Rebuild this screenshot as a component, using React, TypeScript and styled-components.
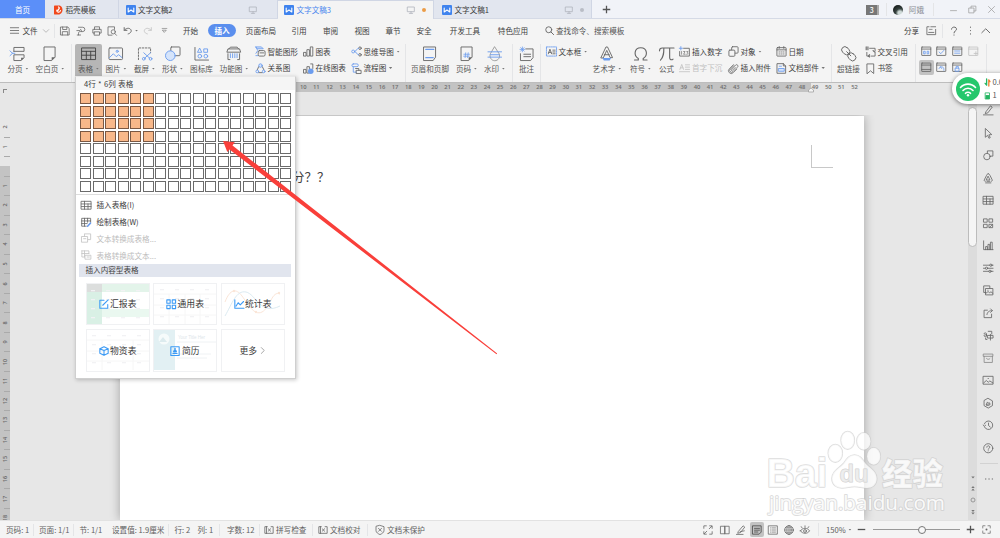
import React from 'react';
import styled, { createGlobalStyle, css } from 'styled-components';

const GlobalStyle = createGlobalStyle`
  html, body { margin: 0; padding: 0; overflow: hidden; }
  * { box-sizing: border-box; }
  body { font-family: "Noto Sans CJK SC", sans-serif; font-size: 7.6px; line-height: 10px; color: #3e3e3e; }
`;

const INK = '#666';
const BLUE = '#6b9cee';

/* ---------- shared parts ---------- */

const Window = styled.div`
  position: relative;
  width: 1000px;
  height: 538px;
  overflow: hidden;
  display: flex;
  flex-direction: column;
  background: #f4f4f4;
  white-space: nowrap;
`;

const Svg = styled.svg<{ $s: number }>`
  display: block;
  flex: none;
  width: ${p => p.$s}px;
  height: ${p => p.$s}px;
  overflow: visible;
  fill: none;
  stroke: ${INK};
  stroke-width: 0.95;
  stroke-linecap: round;
  stroke-linejoin: round;
  .b { stroke: ${BLUE}; }
  .bf { fill: ${BLUE}; stroke: none; }
  .lf { fill: #d5e4fb; stroke: ${BLUE}; }
  .kf { fill: ${INK}; stroke: none; }
`;

const Divider = styled.i<{ $h: number; $l?: number; $r?: number }>`
  flex: none;
  width: 1px;
  height: ${p => p.$h}px;
  margin-left: ${p => p.$l ?? 0}px;
  margin-right: ${p => p.$r ?? 0}px;
  background: #e4e5e7;
`;

const Caret = styled.i`
  flex: none;
  width: 3.4px;
  height: 2px;
  margin-left: 2.6px;
  background: #777;
  clip-path: polygon(0 0, 100% 0, 50% 100%);
`;

const icons: Record<string, React.ReactNode> = {
  /* 16 unit ribbon icons */
  pageBreak: <><path d="M4 5.500V1.500h10.500V5.500H4M4 9.500v5.500h7.500l3-3V9.500z" /><path className="kf" d="M11.500 15v-3h3z" /><path className="b" d="M0 5l2.500 2.500L0 10M2.500 7.500H5" /></>,
  blank: <><path d="M2.500 1h11v10.500L10 15H2.500z" /><path className="kf" d="M10 15v-3.500h3.500z" /></>,
  table: <path stroke="#444" d="M1 2h14v12H1zM1 5.500h14M1 9.500h14M5.500 5.500V14M10 5.500V14" />,
  picture: <><rect x="1" y="2" width="14" height="12" rx="1" /><path className="b" d="M1.500 12l4-4 3 3 2.500-2 3.500 3" /><circle className="b" cx="9.500" cy="5.500" r="1.100" /></>,
  clip: <><path strokeDasharray="1.600 1.600" d="M1.500 14V2h12.500v5" /><path className="b" d="M7 7l6 5.500M14 7l-6 5.500" /><circle className="b" cx="7" cy="13.200" r="1.400" /><circle className="b" cx="14" cy="13.200" r="1.400" /></>,
  shapes: <><rect x="6" y="1" width="9.500" height="9" rx=".8" /><circle className="lf" cx="5.500" cy="10" r="5" /></>,
  iconLib: <g className="b"><path stroke={INK} d="M1 1.500v13h14" /><path d="M6 2.500l2 4H4zM10.500 3h3.500v3.500h-3.500z" /><circle cx="6" cy="10.500" r="1.900" /><circle cx="12.200" cy="10.500" r="1.900" /></g>,
  func: <><path d="M1 6l1-3h12l1 3zM3 3l1.500-1.800h7L13 3M2 8v6h2M14 8v6h-2" /><path className="b" d="M4.500 8v4M6.800 8v4M9.100 8v4M11.400 8v4" /></>,
  headFoot: <><path d="M2 1h12v10.500L11.500 15H2z" /><path className="b" strokeWidth="1.500" d="M4 3.500h8M4 12h7.500" /></>,
  pageNo: <><path d="M2.500 1h11v10.500L10 15H2.500z" /><path className="kf" d="M10 15v-3.500h3.500z" /><path className="b" d="M6.900 7L6.300 12M9.500 7L8.900 12M5 8.500h5.800M4.800 10.500h5.800" strokeWidth=".8" /></>,
  watermark: <><path d="M8 1l4.500 7a5 5 0 1 1-9 0z" stroke="#999" /><path className="b" d="M1 6h14M3.500 9h9M1 11.500h14" /></>,
  comment: <><path d="M7 3h7.500v9L12 15H1.500V8" /><path d="M5 8.500h7M5 11h7" /><path className="b" strokeWidth=".8" d="M3.500 1v5M1 3.500h5M1.700 1.700l3.600 3.600M5.300 1.700L1.700 5.300" /></>,
  wordArt: <><path d="M2 12L7.200 1h1.600L14 12h-2.500L8 4.500 4.500 12zM5.500 9h5" /><path className="bf" d="M3.500 12.500h9L11 15H5z" /></>,
  omega: <path strokeWidth="1.150" d="M1.500 14.500h4v-1.700C.5 10 1 1.800 8 1.800s7.500 8.200 2.500 11v1.700h4" />,
  formula: <path strokeWidth="1.150" d="M.5 5c0-2 1-3 3-3h12M5 2c0 5 0 9-3.500 12.500M11 2v10c0 2 2 3 3.500 1.500" />,
  link: <g transform="rotate(45 8 8)"><rect x="-1" y="4.700" width="9" height="6.600" rx="3.300" /><rect x="8" y="4.700" width="9" height="6.600" rx="3.300" /><path d="M5 8h6" /></g>,
  /* 12 unit small icons */
  smart: <><path className="lf" d="M1 1h6l2 2H3z" /><path className="b" d="M1 10.500h2M1 1l2 4-2 3" /><rect x="3.500" y="5" width="7.500" height="6" rx="1.500" /><path d="M5.500 7.500h4" /></>,
  relation: <><path d="M4 4L2.500 7.500M8 4l1.700 3.500M4 10.500h4" /><circle className="lf" cx="6" cy="2.800" r="1.900" /><circle className="b" cx="2.500" cy="9.200" r="1.500" /><circle className="b" cx="9.500" cy="9.200" r="1.500" /></>,
  chart: <path d="M1 7h2.300v4H1zM4.700 4H7v7H4.700zM8.400 1h2.300v10H8.400z" />,
  chartWeb: <><path d="M1 7h2.300v4H1zM4.700 4H7v7H4.700zM8.400 1h2.300v5" /><circle className="bf" cx="8.500" cy="9" r="3" /></>,
  mind: <g className="b"><circle cx="2.400" cy="6" r="1.600" /><circle stroke={INK} cx="9.800" cy="2.400" r="1.400" /><circle stroke={INK} cx="9.800" cy="9.600" r="1.400" /><path d="M4 6c2 0 2-3.600 4.300-3.600M4 6c2 0 2 3.600 4.300 3.600" /></g>,
  flow: <><rect className="b" x="1" y="1" width="7" height="3" rx="1.500" /><path className="b" d="M2.500 4v6H6" /><rect x="6" y="8" width="5" height="3.500" /><path d="M8.500 8V6H5" /></>,
  textBox: <><rect className="b" strokeDasharray="1.500 1" x=".5" y="1" width="11" height="10" /><path d="M2.500 8.500l1.800-5 1.800 5M3 7h2.500M7.500 4.500H10M7.500 6.500H10M7.500 8.500H10" /></>,
  insNum: <><path d="M5 2.500h6.300v8.500H.7V6" /><path d="M2.800 6v3M5 6h1.600L5 9h1.700M8.500 6h1.200L9 7.300l.8.700-.6 1h-.8" strokeWidth=".7" /><path className="b" d="M2 .7v3.600M.3 2.500h3.500" /></>,
  dropCap: <g stroke="#c4c4c4"><path d="M1 7l2-5.500L5 7M1.700 5.300h2.600M7 2h4.500M7 4.500h4.500M7 7h4.500M.5 9.500h11" /></g>,
  object: <><rect x="4" y=".8" width="7" height="7" rx="1" /><rect x="1" y="4.500" width="6.500" height="6.700" rx="1" fill="#f4f4f4" /></>,
  clipAttach: <path transform="rotate(45 6 6)" d="M4 3.500V9a2 2 0 0 0 4 0V2a1.500 1.500 0 0 0-3-.500V8.500a.800.800 0 0 0 1.500 0V4M3 3v6.500a3 3 0 0 0 6 0V4" strokeWidth=".8" />,
  calendar: <><rect x="1" y="1.800" width="10" height="9.200" rx=".5" /><path d="M3.500.6v2M8.500.6v2M1 4.200h10" /><path strokeWidth=".8" d="M3.200 6.500h1M5.500 6.500h1M7.800 6.500h1M3.200 8.700h1M5.500 8.700h1M7.800 8.700h1" /></>,
  docPart: <><path className="lf" d="M3 6h6v3H3z" /><path d="M1.500.7h6.500l2.500 2.500v8h-9zM8 .7v2.500h2.500" /><path className="b" d="M3.500 3.500h2.500" /></>,
  crossRef: <><path d="M5 2.500h6v3M2 7v4h3.500M7 11h4V8" /><path d="M1.300 1v3M3.200 1v3M8.800 5l2.200 2M5 9.500L3.800 11 5 12" strokeWidth="1.200" /></>,
  bookmark: <path d="M2.500 1h7v10.500L6 8.500l-3.500 3z" />,
  ctl: <><rect x=".8" y="1.200" width="10.400" height="9.600" rx=".4" /><path d="M.8 3.500h10.400" /></>,
  /* quick access */
  save: <><path d="M1 1.200h8.500l1.500 2v7.600H1z" /><path d="M3.200 1.200v3h5v-3M2.800 10.800V6.800h6.400v4" /></>,
  exportPdf: <path d="M3 1.500h5a2.600 2.600 0 0 1 0 5.200H5c-1.500 0-2 1-2 2v2M1 5.500h3.500M5.500 4L7 6.500M1.500 10.800h4" />,
  print: <path d="M3 4V1h6v3M3 8.500H1V4h10v4.500H9M3 7h6v4H3z" />,
  preview: <><path d="M6 11H1.200V1H9v3" /><circle cx="7.500" cy="7" r="2.500" /><path d="M9.400 9l2 2.200" /></>,
  undo: <path strokeWidth="1.200" d="M1.500 2v3.500H5M1.700 5.300C4 2.500 8 2 9.800 4.500S9 9.500 6.500 10" />,
  redo: <path stroke="#c8c8c8" strokeWidth="1.200" d="M10.500 2v3.500H7M10.300 5.300C8 2.500 4 2 2.200 4.500S3 9.500 5.500 10" />,
  more: <path d="M2 2.500h8M3 5.500h6L6 8.800z" />,
  burger: <path strokeWidth="1.100" d="M.5 2.300h11M.5 6h11M.5 9.700h11" />,
  down: <path stroke="#999" d="M2 4l4 4 4-4" />,
  up: <path strokeWidth="1.200" d="M1 8.500L6 3.500l5 5" />,
  search: <><circle cx="5" cy="5" r="4" strokeWidth="1.200" /><path strokeWidth="1.300" d="M8 8l3.500 3.500" /></>,
  share: <><path d="M3.500 2H1v9h10V5" /><path d="M5.500 2H11M3 8.500h6" /><path strokeWidth=".8" d="M4 5h3" /></>,
  question: <path strokeWidth="1.200" d="M3 3.800C3 .4 9 .4 9 3.800 9 6 6 5.800 6 8.300M6 10.700v.3" />,
  dotsV: <path strokeWidth="1.500" d="M6 1.500v.1M6 6v.1M6 10.500v.1" />,
  monitor: <path stroke="#b0b4bd" strokeWidth="1.200" d="M1 1.500h10v7H1zM6 8.500v2.500M3.500 11h5" />,
  plus: <path stroke="#555" strokeWidth="1.700" strokeLinecap="butt" d="M6 1v10M1 6h10" />,
  minus: <path stroke="#555" strokeWidth="1.700" strokeLinecap="butt" d="M1 6h10" />,
  winMin: <path stroke="#999" d="M2 7.500h8" />,
  winMax: <path stroke="#999" d="M4 4V1.500h6.500V8H8M1.500 4H8v6.500H1.500z" />,
  winClose: <path stroke="#999" d="M2 2l8 8M10 2l-8 8" />,
  /* sidebar */
  pen: <path d="M3.500 7.500l5-6.500 2 1.500-5 6.500-2.500.700zM.5 11.300h11" />,
  cursor: <path d="M3 .8l7 6.700-3.300.3L8.300 11l-1.500.7-1.500-3.300L3 10.300z" />,
  sideShape: <><path d="M5 3.500V1h6.300v6H8.500" /><circle cx="4.500" cy="7.500" r="3.700" /></>,
  cone: <path d="M6 .8c1 0 1.500 1 2 2l2.500 5c.5 1.200-.5 1.700-1.300 1.700M6 .8c-1 0-1.500 1-2 2L1.500 7.800c-.5 1.200.5 1.700 1.300 1.700M3 11.300h6M6 4l2 4H4zM4.500 9.500h3" />,
  sideTable: <path d="M.5 1.500h11v9H.5zM.5 4.500h11M.5 7.500h11M4 1.500v9M8 4.500v6" />,
  apps: <><path d="M1 1h3.800v3.800H1zM7.200 1H11v3.800H7.200zM1 7.200h3.800V11H1zM7.200 7.200H11V11H7.200z" /><path d="M7.500 10.700l3.200-3.200" /></>,
  sideChart: <path d="M.7 1v10h10.800M3 11V7.500h2V11M5.700 11V5h2v6M8.500 11V2.500h2V11" />,
  sliders: <><path d="M.5 2.500h7M10.500 2.500h1M.5 6h2M5.500 6h6M.5 9.500h6M9.500 9.500h2" /><circle cx="9" cy="2.500" r="1.300" /><circle cx="4" cy="6" r="1.300" /><circle cx="8" cy="9.500" r="1.300" /></>,
  gallery: <path d="M3 8.500H.8v-7.500h7v2.500M3.300 4h8v7.300h-8zM3.300 9.500l2.500-2 1.800 1.300 1.500-1 2.200 1.700M5.500 6h.3" />,
  shareOut: <path d="M5 2.500H1.200V11h8.600V7M4.500 7.500C5 4 7.500 3 10.500 3M8.700 1l2 2-2 2" />,
  translate: <path d="M1 4.200c0-1.200 3-1.200 3 0V7M4 5.300c-4 0-3.500 2.200-1.500 2 1 0 1.500-.8 1.500-.8M6 1.500h4v3M5.500 6.200h6v3h-6zM8.500 5v6.500M3 9v1.800h1.500" />,
  archive: <g stroke="#888"><path d="M.7 1.200h10.600v2.600H.7zM1.300 3.800v7h9.400v-7M4 6.300c1 1.300 3 1.300 4 0" /></g>,
  sidePic: <path d="M.5 1.500h11v9H.5zM.8 9l3-2.700 2.200 2 1.800-1.500L11.200 9M5.800 4h.4" />,
  hexagon: <path d="M6 .5l4.800 2.800v5.400L6 11.500 1.200 8.700V3.300zM4 8c-1-2 1-2 1-3.500L6.500 6l1-.5C9 8.500 6 9.500 4 8zM5 7h2" />,
  history: <path d="M1.700 8a4.900 4.900 0 1 0-.2-3.500M.3 5.800l1.300 1.500 1.400-1.300M6.300 3.500V6.300l2 1.700" />,
  help: <><circle cx="6" cy="6" r="5.200" /><path d="M4.300 4.800c0-2.200 3.400-2.200 3.400 0 0 1.200-1.700 1-1.700 2.400M6 8.900v.1" /></>,
  dotsH: <path stroke="#888" strokeWidth="1.700" d="M2 6h.1M6 6h.1M10 6h.1" />,
  /* menu + status */
  tblPen: <><path d="M11 6V1.500H.8v9H6M.8 4.500H11M.8 7.500H7M4 1.500v9M7.500 1.500V6" /><path className="b" strokeWidth="1.800" d="M7.500 10.500l3.300-3.500" /></>,
  conv1: <path stroke="#c4c4c4" d="M5 1h6v6.500H8M4 1v3M1 4h6.500v6.500H1zM3 6.500h2.500" />,
  conv2: <path stroke="#c4c4c4" d="M1 1h8v3M1 1v7h3M1 4h8M4 1v7M5 6h6.300v4.500H5zM7 8h2.500" />,
  spell: <path d="M4 2H1v8h10V2H8.500M5 4.500l3 3M8 4.500l-3 3M3 2v8" />,
  shield: <path d="M6 .5l4.800 1.500v4.500c0 2.500-2.500 4-4.800 5-2.300-1-4.800-2.500-4.800-5V2zM4.200 4l3.600 3.600M7.800 4L4.200 7.600" />,
  expand: <path d="M1 4V1h3M8 1h3v3M11 8v3H8M4 11H1V8M7.500 4.500L10.500 1.500M4.500 7.500l-3 3" />,
  book: <path d="M1 1.500h5v9H1zM6 1.500h5v9H6z" />,
  edit: <path d="M3 7.500l5.500-6.500 2 1.500-5 6.500-3 .8zM.5 11.300h8M5 8l5-1" />,
  doc: <path d="M1 1h10v7.500L8.500 11H1zM3 4h6M3 6.200h6M3 8.400h4" stroke="#444" />,
  outline: <><path d="M.8 1h10.400v10H.8z" /><path strokeWidth=".8" d="M3 3.500h.5M5 3.500h4M5 6h4M3 6h.5M5 8.500h4M3 8.500h.5" /></>,
  globe: <><circle cx="6" cy="6" r="5.200" /><path strokeWidth=".7" d="M.8 6h10.400M6 .8v10.400M1.800 3.300h8.400M1.800 8.700h8.400" /><ellipse cx="6" cy="6" rx="2.600" ry="5.200" strokeWidth=".7" /></>,
  eye: <><path d="M.5 7c2.500-4 8.500-4 11 0-2.500 4-8.500 4-11 0zM6 3V1M2.500 3.500l-1-1.500M9.500 3.500l1-1.500" /><circle cx="6" cy="7.200" r="1.700" /></>,
  fit: <><path d="M1 4V1h3M8 1h3v3M11 8v3H8M4 11H1V8" /><circle className="kf" cx="6" cy="6" r="1.300" /></>,
};

const SMALL = 12;
const LARGE = 16;
const Icon = ({ n, s = 11, big }: { n: string; s?: number; big?: boolean }) => {
  const v = big ? LARGE : SMALL;
  return <Svg $s={s} viewBox={`0 0 ${v} ${v}`}>{icons[n]}</Svg>;
};

/* ---------- tab bar ---------- */

const TabBar = styled.header`
  display: flex;
  flex: none;
  height: 19px;
  background: #f1f3f8;
  border-bottom: 1px solid #d5dae6;
`;

const HomeTab = styled.div`
  width: 45px;
  height: 18px;
  background: #5b8ff9;
  color: #fff;
  text-align: center;
  line-height: 20px;
`;

const Tab = styled.div<{ $w: number; $pl: number; $active?: boolean }>`
  display: flex;
  align-items: center;
  width: ${p => p.$w}px;
  padding-left: ${p => p.$pl}px;
  padding-top: ${p => (p.$active ? 0 : 2)}px;
  height: ${p => (p.$active ? 19 : 18)}px;
  background: ${p => (p.$active ? '#f4f4f4' : '#e2e6ef')};
  color: ${p => (p.$active ? '#4a86ee' : '#3a3a3a')};
  border-right: 1px solid #d0d6e4;
  border-top: ${p => (p.$active ? '1px solid #d0d6e4' : '0')};
`;

const TabText = styled.span`
  flex: 1;
  margin-left: 2.500px;
`;

const TabTools = styled.span<{ $r: number }>`
  display: flex;
  align-items: center;
  gap: 7px;
  margin-right: ${p => p.$r}px;
`;

const Dot = styled.i<{ $c: string }>`
  width: 4px;
  height: 4px;
  border-radius: 50%;
  background: ${p => p.$c};
`;

const WLogo = () => (
  <Svg $s={10} viewBox="0 0 10 10">
    <rect width="10" height="10" rx="1" fill="#3f83ee" stroke="none" />
    <path d="M2.200 3v4L5 5l2.800 2V3" stroke="#fff" strokeWidth="1.100" />
  </Svg>
);

const ShellLogo = () => (
  <Svg $s={10} viewBox="0 0 10 10">
    <path d="M2 .5h4c2.500 0 3.500 2.500 3.500 4.500S8 9.500 5.500 9.500H2C1 9.500 1 9 1 8V2C1 1 1 .5 2 .5z" fill="#f1481c" stroke="none" />
    <path d="M5.500 2c2 1-.5 2.500-.5 3.500M4 5c-1 2.500 3 3 3.500.500" stroke="#fff" strokeWidth="1.200" />
  </Svg>
);

const TabRight = styled.div`
  display: flex;
  align-items: center;
  height: 19px;
  margin-left: auto;
  color: #8a8d94;
`;

const CountBadge = styled.b`
  width: 13px;
  height: 10px;
  background: #777;
  border-right: 2px solid #aaa;
  color: #fff;
  font-size: 7px;
  font-weight: 500;
  line-height: 10px;
  text-align: center;
`;

const Avatar = styled.i`
  width: 10px;
  height: 10px;
  margin: 0 6px 0 6px;
  border-radius: 50%;
  background: radial-gradient(circle at 70% 80%, #cfdad8 0 18%, #36423f 40%, #1f2524 70%);
`;

const Slot = styled.span<{ $w: number }>`
  display: flex;
  flex: none;
  align-items: center;
  justify-content: center;
  width: ${p => p.$w}px;
`;

/* ---------- menu bar ---------- */

const MenuBar = styled.nav`
  display: flex;
  flex: none;
  align-items: center;
  height: 23px;
  padding-left: 8px;
`;

const ActiveMenu = styled.b`
  width: 28px;
  height: 13px;
  border-radius: 7px;
  background: #5b8fee;
  color: #fff;
  font-weight: 700;
  text-align: center;
  line-height: 13px;
`;

const MenuRight = styled.div`
  display: flex;
  align-items: center;
  margin-left: auto;
`;

const SearchBox = styled.span`
  display: flex;
  align-items: center;
  gap: 2px;
  margin-left: 10.500px;
  color: #555;
`;

const menus: [string, number][] = [
  ['页面布局', 47], ['引用', 29], ['审阅', 34], ['视图', 29], ['章节', 33], ['安全', 29], ['开发工具', 53], ['特色应用', 43],
];

/* ---------- ribbon ---------- */

const RibbonBar = styled.div`
  display: flex;
  flex: none;
  height: 41px;
  padding: 2px 0 0 4px;
  border-bottom: 1px solid #bdbdbd;
`;

const BigBtn = styled.div<{ $w: number; $on?: boolean }>`
  display: flex;
  flex: none;
  flex-direction: column;
  align-items: center;
  gap: 2.500px;
  width: ${p => p.$w}px;
  height: 32px;
  padding-top: 1.500px;
  color: #565656;
  ${p => p.$on && css`background: #b6b6b6; border-radius: 2px 2px 0 0;`}
`;

const Label = styled.span<{ $off?: boolean }>`
  display: flex;
  align-items: center;
  color: ${p => (p.$off ? '#c0c0c0' : 'inherit')};
`;

const SmallCol = styled.div<{ $w: number; $l?: number }>`
  display: flex;
  flex: none;
  flex-direction: column;
  gap: 5.500px;
  width: ${p => p.$w}px;
  margin-left: ${p => p.$l ?? 0}px;
  padding-top: 2px;
`;

const SmallBtn = styled.div`
  display: flex;
  align-items: center;
  gap: 2px;
  height: 11px;
`;

const Controls = styled.div`
  display: grid;
  grid-template-columns: repeat(4, 15.700px);
  grid-auto-rows: 15px;
  row-gap: 1px;
  width: 67px;
`;

const ControlCell = styled.span<{ $on?: boolean; $off?: boolean }>`
  display: flex;
  align-items: center;
  justify-content: center;
  width: 15px;
  height: 15px;
  border-radius: 2px;
  background: ${p => (p.$on ? '#c2c2c2' : 'transparent')};
  opacity: ${p => (p.$off ? 0.35 : 1)};
`;

const Big = ({ w, n, t, caret, on }: { w: number; n: string; t: string; caret?: boolean; on?: boolean }) => (
  <BigBtn $w={w} $on={on}>
    <Icon n={n} s={15.5} big />
    <Label>{t}{caret && <Caret />}</Label>
  </BigBtn>
);

type SmallSpec = [string, string, ('c' | 'off')?];
const Smalls = ({ w, l, items }: { w: number; l?: number; items: SmallSpec[] }) => (
  <SmallCol $w={w} $l={l}>
    {items.map(([n, t, f]) => (
      <SmallBtn key={t}>
        <Icon n={n} s={11} />
        <Label $off={f === 'off'}>{t}{f === 'c' && <Caret />}</Label>
      </SmallBtn>
    ))}
  </SmallCol>
);

const controlMarks: React.ReactNode[] = [
  <path className="b" d="M3 8.500V6h1.800v2.500zM7 8.500V6h1.800v2.500z" />,
  <path className="b" d="M3.500 6.800L5.500 8.800 9 5" />,
  <path className="b" d="M3 5.700h6M3 8.200h6" />,
  <path d="M7 8.500h4M9 6.500v4" />,
  <path d="M.8 8.500h10.400" />,
  <path className="b" d="M3.500 7.500L5 5.500l1.500 2M5 5.500c4 0 4 1 4 4" />,
  <path className="b" d="M4 7h4v3.500H4zM4.800 7V5h2.400v2" />,
];

const Ribbon = () => (
  <RibbonBar>
    <Big w={28} n="pageBreak" t="分页" caret />
    <Big w={36} n="blank" t="空白页" caret />
    <Divider $h={38} $l={3} $r={3} />
    <Big w={27} n="table" t="表格" caret on />
    <Big w={28} n="picture" t="图片" caret />
    <Big w={29} n="clip" t="截屏" caret />
    <Big w={27} n="shapes" t="形状" caret />
    <Big w={31} n="iconLib" t="图标库" />
    <Big w={34} n="func" t="功能图" caret />
    <Smalls w={48} l={3.5} items={[['smart', '智能图形'], ['relation', '关系图']]} />
    <Smalls w={48} items={[['chart', '图表'], ['chartWeb', '在线图表']]} />
    <Smalls w={54.500} items={[['mind', '思维导图', 'c'], ['flow', '流程图', 'c']]} />
    <Divider $h={38} $r={3} />
    <Big w={42} n="headFoot" t="页眉和页脚" />
    <Big w={31} n="pageNo" t="页码" caret />
    <Big w={25} n="watermark" t="水印" caret />
    <Divider $h={38} $l={5} />
    <Big w={27} n="comment" t="批注" />
    <Divider $h={38} />
    <Smalls w={44.500} l={4.500} items={[['textBox', '文本框', 'c']]} />
    <Big w={34} n="wordArt" t="艺术字" caret />
    <Big w={33} n="omega" t="符号" caret />
    <Big w={19} n="formula" t="公式" />
    <Smalls w={48.500} l={3} items={[['insNum', '插入数字'], ['dropCap', '首字下沉', 'off']]} />
    <Smalls w={48} items={[['object', '对象', 'c'], ['clipAttach', '插入附件']]} />
    <Smalls w={55} items={[['calendar', '日期'], ['docPart', '文档部件', 'c']]} />
    <Divider $h={38} $r={4} />
    <Big w={26} n="link" t="超链接" />
    <Smalls w={50} l={3} items={[['crossRef', '交叉引用'], ['bookmark', '书签']]} />
    <Divider $h={38} $r={3} />
    <Controls>
      {controlMarks.map((m, i) => (
        <ControlCell key={i} $on={i === 4} $off={i === 3}>
          <Svg $s={10.5} viewBox="0 0 12 12">{icons.ctl}{m}</Svg>
        </ControlCell>
      ))}
    </Controls>
    <Divider $h={30} />
  </RibbonBar>
);

/* ---------- work area ---------- */

const Work = styled.main`
  display: flex;
  flex: none;
  height: 437px;
  background: #e7e7e7;
`;

const VRuler = styled.div`
  width: 10px;
  height: 437px;
  padding-top: 6px;
  background: linear-gradient(#e7e7e7 0 83px, #c3c3c3 83px);
  overflow: hidden;
  display: flex;
  flex-direction: column;
  align-items: center;
  font: 600 5.500px/8px "Open Sans", sans-serif;
  color: #666;
`;

const VMark = styled.span<{ $h: number }>`
  display: flex;
  flex: none;
  align-items: center;
  justify-content: center;
  width: 10px;
  height: ${p => p.$h}px;
  border-bottom: 1px solid #a5a5a5;
  border-image: linear-gradient(90deg, transparent 40%, #aaa 40%) 1;
  span { transform: rotate(-90deg); }
`;

const TabStop = styled.i`
  flex: none;
  width: 4px;
  height: 4px;
  margin-bottom: 25px;
  border: solid #888;
  border-width: 1px 0 0 1px;
`;

const Canvas = styled.div`
  display: flex;
  flex-direction: column;
  width: 958px;
`;

const HRuler = styled.div`
  display: flex;
  flex: none;
  align-items: center;
  height: 9px;
  padding-left: 286.700px;
  background: linear-gradient(90deg, #e7e7e7 0 110px, #c3c3c3 110px 801px, #e7e7e7 801px);
  font: 600 5.800px/9px "Open Sans", sans-serif;
  color: #6e6e6e;
  span { flex: none; width: 13.130px; text-align: center; }
`;

const Page = styled.article`
  width: 744px;
  height: 404px;
  margin: 24px 0 0 110px;
  padding: 29px 31px 0 0;
  background: #fff;
  box-shadow: 0 0 10px rgba(0, 0, 0, 0.3);
  clip-path: inset(-1px -12px 0 -12px);
  display: flex;
  justify-content: space-between;
`;

const PageText = styled.p`
  margin: 25px 0 0 172px;
  font: 12.500px/16px "Liberation Serif", "Noto Sans CJK SC", serif;
  color: #444;
`;

const Corner = styled.i`
  width: 22px;
  height: 23px;
  border: solid #c8c8c8;
  border-width: 0 0 1px 1px;
`;

const ScrollTrack = styled.div`
  display: flex;
  flex-direction: column;
  align-items: center;
  width: 9px;
  padding-top: 24px;
  background: #dcdcdc;
`;

const Thumb = styled.i`
  width: 9px;
  height: 140px;
  border: 1px solid #bcbcbc;
  border-radius: 5px;
  background: #f5f5f5;
`;

const ScrollTools = styled.div`
  display: flex;
  flex: 1;
  flex-direction: column;
  justify-content: flex-end;
  padding-bottom: 2px;
`;

const ScrollGlyphs = styled.svg`
  display: block;
  width: 8px;
  height: 42px;
`;

const Side = styled.aside`
  display: flex;
  flex-direction: column;
  align-items: center;
  width: 23px;
  padding-top: 16px;
`;

const SideSlot = styled.span`
  display: flex;
  flex: none;
  align-items: center;
  height: 22.530px;
`;

const SideLine = styled.i`
  flex: none;
  width: 18px;
  height: 1px;
  margin: 3.500px 0;
  background: #d2d2d2;
`;

const sideIcons = ['pen', 'cursor', 'sideShape', 'cone', 'sideTable', 'apps', 'sideChart', 'sliders', 'gallery', 'shareOut', 'translate', 'archive', 'sidePic', 'hexagon', 'history', 'help'];

/* ---------- table menu ---------- */

const Menu = styled.section`
  position: absolute;
  left: 75px;
  top: 76px;
  width: 221px;
  height: 303px;
  background: #fff;
  border: 1px solid #cfcfcf;
  border-top-color: #e8e8e8;
  box-shadow: 1px 1px 4px rgba(0, 0, 0, 0.22);
`;

const MenuTitle = styled.div`
  height: 13px;
  padding-left: 8px;
  background: #f5f5f5;
  line-height: 13px;
  word-spacing: 0.600px;
`;

const CellGrid = styled.div`
  display: grid;
  grid-template-columns: repeat(17, 11px);
  grid-auto-rows: 11px;
  gap: 1.510px;
  padding: 3px 0 2px 4px;
  border-bottom: 1px solid #ddd;
`;

const Cell = styled.i<{ $on: boolean }>`
  border: 1px solid ${p => (p.$on ? '#7a5843' : '#6b6b6b')};
  background: ${p => (p.$on ? '#f8b88a' : '#fff')};
`;

const MenuItems = styled.ul`
  margin: 0;
  padding: 2px 0 0 5px;
  list-style: none;
`;

const MenuItem = styled.li<{ $off?: boolean }>`
  display: flex;
  align-items: center;
  gap: 5px;
  height: 16.900px;
  color: ${p => (p.$off ? '#bdbdbd' : '#3a3a3a')};
`;

const Section = styled.div`
  width: 212px;
  height: 12.500px;
  margin-left: 3px;
  padding-left: 6.500px;
  background: #e1e5ee;
  line-height: 12.500px;
`;

const Cards = styled.div`
  display: grid;
  grid-template-columns: repeat(3, 64px);
  grid-auto-rows: 42.500px;
  gap: 4px 3.500px;
  padding: 6px 0 0 9.500px;
`;

const Card = styled.div`
  display: grid;
  border: 1px solid #f0f1f3;
  overflow: hidden;
  > * { grid-area: 1 / 1; }
`;

const CardLabel = styled.span`
  display: flex;
  align-items: center;
  justify-content: center;
  gap: 1.500px;
  padding-top: 1px;
  font-size: 8.800px;
  line-height: 12px;
  color: #3a3a3a;
`;

const CardArt = styled.svg`
  display: block;
  width: 62px;
  height: 40px;
`;

const CB = '#3d9bf5';
const cardIcon = (d: React.ReactNode) => <Svg $s={10} viewBox="0 0 12 12"><g stroke={CB} strokeWidth="1.300">{d}</g></Svg>;

const Marks = ({ x = 4, y = 6 }: { x?: number; y?: number }) => (
  <g fill="#f2f2f4">
    {[0, 1, 2, 3].flatMap(r => [0, 1, 2, 3].map(c => <rect key={`${r}${c}`} x={x + c * 15} y={y + r * 9} width="4" height="1.300" />))}
  </g>
);

const cards: { t: string; icon: React.ReactNode; art: React.ReactNode }[] = [
  {
    t: '汇报表',
    icon: cardIcon(<path d="M6 1.500H1V11h9.500V6.500M4.500 7.500L11 1" />),
    art: <><rect width="62" height="8" fill="#e3f4ea" /><rect width="15" height="41" fill="#d9f0e5" /><rect width="15" height="8" fill="#dcdedd" /><rect x="15" y="25" width="47" height="8" fill="#eaf8f0" /><Marks /></>,
  },
  {
    t: '通用表',
    icon: cardIcon(<path d="M1 1h4v4H1zM7.500 1h4v4h-4zM1 7.500h4v4H1zM7.500 7.500h4v4h-4z" />),
    art: <><path d="M0 10h62M0 21h62M0 31h62M15 10v30M31 10v30M46 10v30" stroke="#f6f6f6" /><Marks x={6} y={5} /></>,
  },
  {
    t: '统计表',
    icon: cardIcon(<path d="M1 1v10h11M2.500 8.500l2.500-4 2.500 2.500L11.500 3" />),
    art: <><path d="M3 18C8 5 14 4 20 12s12 20 20 16 10-22 18-18" fill="none" stroke="#fbe6d8" /><path d="M3 32C10 20 14 6 24 8s14 24 34 14" fill="none" stroke="#dcebf2" /><g fill="#fbe6d8"><circle cx="12" cy="7" r="1.200" /><circle cx="34" cy="28" r="1.200" /><circle cx="57" cy="9" r="1.200" /></g></>,
  },
  {
    t: '物资表',
    icon: cardIcon(<path d="M6 .8l5 2.400v5.600L6 11.200 1 8.800V3.200zM1 3.200l5 2.300 5-2.300M6 5.500v5.700" />),
    art: <><path d="M0 10h62M0 21h62M0 31h62M15 10v30M46 10v30" stroke="#f6f6f6" /><Marks x={5} y={5} /></>,
  },
  {
    t: '简历',
    icon: cardIcon(<><path d="M1 .8h10v10.500H1zM3.500 9h5" /><path d="M6 3v1.500M4.500 7c0-2 3-2 3 0z" strokeWidth="1.800" /></>),
    art: <><rect width="21" height="41" fill="#e2f0f3" /><circle cx="10" cy="9" r="5.500" fill="#f6fbfb" /><path d="M5 12l4-5 4 5z" fill="#dcebee" /><path d="M23 12h39M23 24h34M23 28h30" stroke="#eff2f4" /></>,
  },
];

const TableMenu = () => (
  <Menu>
    <MenuTitle>4行 * 6列 表格</MenuTitle>
    <CellGrid>
      {Array.from({ length: 136 }, (_, i) => <Cell key={i} $on={i < 68 && i % 17 < 6} />)}
    </CellGrid>
    <MenuItems>
      <MenuItem><Icon n="sideTable" s={10.500} />插入表格(I)</MenuItem>
      <MenuItem><Icon n="tblPen" s={10.500} />绘制表格(W)</MenuItem>
      <MenuItem $off><Icon n="conv1" s={10.500} />文本转换成表格...</MenuItem>
      <MenuItem $off><Icon n="conv2" s={10.500} />表格转换成文本...</MenuItem>
    </MenuItems>
    <Section>插入内容型表格</Section>
    <Cards>
      {cards.map(c => (
        <Card key={c.t}>
          <CardArt viewBox="0 0 62 40">
            {c.art}
            {c.t === '简历' && <text x="24" y="9" fontSize="4.500" fontFamily="Liberation Sans" fill="#dde6ea">Your Title Her</text>}
          </CardArt>
          <CardLabel>{c.icon}{c.t}</CardLabel>
        </Card>
      ))}
      <Card>
        <CardLabel>更多<Svg $s={7} viewBox="0 0 12 12"><path d="M4 1l5 5-5 5" stroke="#999" strokeWidth="1.500" /></Svg></CardLabel>
      </Card>
    </Cards>
  </Menu>
);

/* ---------- overlays ---------- */

const Overlay = styled.svg`
  position: absolute;
  left: 0;
  top: 0;
  width: 1000px;
  height: 538px;
  pointer-events: none;
`;

const Widget = styled.div`
  position: absolute;
  left: 952px;
  top: 73px;
  width: 60px;
  height: 31px;
  padding: 3.500px;
  display: flex;
  gap: 4px;
  border-radius: 16px 0 0 16px;
  background: #fff;
  box-shadow: 0 1px 4px rgba(0, 0, 0, 0.5);
  color: #555;
`;

const WidgetRows = styled.div`
  display: flex;
  flex-direction: column;
  justify-content: center;
  gap: 3px;
`;

const WidgetRow = styled.span`
  display: flex;
  align-items: center;
  gap: 2px;
`;

const Watermark = () => (
  <g fill="#fff" fillOpacity=".75" stroke="#c6c6c6" strokeOpacity=".6" strokeWidth="1.600" paintOrder="stroke" strokeLinejoin="round">
    <text x="766.500" y="486.500" fontFamily="Liberation Sans" fontWeight="700" fontSize="41" textLength="61" lengthAdjust="spacingAndGlyphs">Bai</text>
    <ellipse cx="835.300" cy="453.300" rx="7" ry="8.800" />
    <ellipse cx="847.700" cy="440.300" rx="6.600" ry="8.800" />
    <ellipse cx="863.700" cy="441.300" rx="6.800" ry="8.500" />
    <ellipse cx="873.700" cy="456.300" rx="6.600" ry="8.500" />
    <path d="M854.500 455c-5 0-7.500 3.500-10.500 8-4 5-12 8-12 15.500 0 6.500 5 9.500 10 9.500 4.500 0 8-1.500 12.500-1.500s8 1.500 12.500 1.500c5 0 9.700-3 9.700-9.500 0-7.500-7.500-10.500-11.700-15.500-3-4.500-5.500-8-10.500-8z" />
    <text x="839.500" y="482" fontFamily="Liberation Sans" fontWeight="700" fontSize="24" textLength="29" lengthAdjust="spacingAndGlyphs" fill="#e9e9e9" strokeOpacity=".8" strokeWidth="1">du</text>
    <text x="882" y="484.500" fontFamily="Noto Sans CJK SC" fontWeight="900" fontSize="31" textLength="61" lengthAdjust="spacingAndGlyphs">经验</text>
    <text x="769" y="509.500" fontFamily="Open Sans" fontWeight="400" fontSize="19.500" textLength="176" lengthAdjust="spacingAndGlyphs" strokeWidth="1.800" fillOpacity=".9">jingyan.baidu.com</text>
  </g>
);

/* ---------- status bar ---------- */

const StatusBar = styled.footer`
  display: flex;
  flex: none;
  align-items: center;
  height: 18px;
  padding-left: 6px;
  background: #f4f4f4;
  border-top: 1px solid #e2e2e2;
  color: #606060;
`;

const StatusItem = styled.span<{ $w: number }>`
  display: flex;
  flex: none;
  align-items: center;
  gap: 2px;
  width: ${p => p.$w}px;
`;

const StatusRight = styled.div`
  display: flex;
  align-items: center;
  margin-left: auto;
`;

const ViewBtn = styled.span<{ $on?: boolean }>`
  display: flex;
  align-items: center;
  justify-content: center;
  width: 14px;
  height: 15px;
  margin-right: 2.170px;
  border-radius: 2px;
  background: ${p => (p.$on ? '#c2c2c2' : 'transparent')};
`;

const Zoom = styled.span`
  display: flex;
  align-items: center;
  width: 28px;
`;

const Slider = styled.span`
  display: flex;
  align-items: center;
  width: 87px;
  height: 9px;
  margin: 0 4px;
  background: linear-gradient(#999, #999) center / 100% 1px no-repeat;
`;

const Knob = styled.i`
  width: 8px;
  height: 8px;
  margin-left: 44.500px;
  border: 1px solid #777;
  border-radius: 50%;
  background: #f8f8f8;
`;

const views = ['expand', 'book', 'edit', 'doc', 'outline', 'globe', 'eye'];

export default function App() {
  return (
    <Window>
      <GlobalStyle />
      <TabBar>
        <HomeTab>首页</HomeTab>
        <Tab $w={74} $pl={8}><ShellLogo /><TabText>稻壳模板</TabText></Tab>
        <Tab $w={158.500} $pl={6.500}>
          <WLogo /><TabText>文字文稿2</TabText><TabTools $r={20}><Icon n="monitor" s={8} /></TabTools>
        </Tab>
        <Tab $w={156.500} $pl={6.500} $active>
          <WLogo /><TabText>文字文稿3</TabText><TabTools $r={7}><Icon n="monitor" s={8} /><Dot $c="#eb9c47" /></TabTools>
        </Tab>
        <Tab $w={158} $pl={8}>
          <WLogo /><TabText>文字文稿1</TabText><TabTools $r={7}><Icon n="monitor" s={8} /><Dot $c="#b9bdc6" /></TabTools>
        </Tab>
        <Slot $w={28}><Icon n="plus" s={9} /></Slot>
        <TabRight>
          <CountBadge>3</CountBadge>
          <Divider $h={13} $l={6.500} />
          <Avatar />
          <span>阿娥</span>
          <Divider $h={13} $l={9} $r={9} />
          <Slot $w={20}><Icon n="winMin" s={9} /></Slot>
          <Slot $w={19}><Icon n="winMax" s={9} /></Slot>
          <Slot $w={18}><Icon n="winClose" s={9} /></Slot>
        </TabRight>
      </TabBar>

      <MenuBar>
        <Slot $w={13}><Icon n="burger" s={9} /></Slot>
        <Slot $w={18}>文件</Slot>
        <Slot $w={14}><Icon n="down" s={8} /></Slot>
        <Divider $h={14} $l={1} $r={2.500} />
        <Slot $w={15}><Icon n="save" s={10} /></Slot>
        <Slot $w={16}><Icon n="exportPdf" s={10} /></Slot>
        <Slot $w={16}><Icon n="print" s={10} /></Slot>
        <Slot $w={15}><Icon n="preview" s={10} /></Slot>
        <Slot $w={22}><Icon n="undo" s={9.500} /><Caret /></Slot>
        <Slot $w={13}><Icon n="redo" s={9.500} /></Slot>
        <Slot $w={20}><Icon n="more" s={7} /></Slot>
        <Slot $w={32}>开始</Slot>
        <Slot $w={31}><ActiveMenu>插入</ActiveMenu></Slot>
        {menus.map(([t, w]) => <Slot key={t} $w={w}>{t}</Slot>)}
        <SearchBox><Icon n="search" s={9} />查找命令、搜索模板</SearchBox>
        <MenuRight>
          <Slot $w={17}>分享</Slot>
          <Slot $w={22}><Icon n="share" s={10.500} /></Slot>
          <Divider $h={14} $r={3} />
          <Slot $w={16}><Icon n="question" s={10} /></Slot>
          <Slot $w={16}><Icon n="dotsV" s={9} /></Slot>
          <Slot $w={16}><Icon n="up" s={9.500} /></Slot>
          <Slot $w={6} />
        </MenuRight>
      </MenuBar>

      <Ribbon />

      <Work>
        <VRuler>
          <TabStop />
          {['2', '1'].map(t => <VMark key={t} $h={19.500}><span>{t}</span></VMark>)}
          <VMark $h={19.500} />
          {Array.from({ length: 18 }, (_, i) => <VMark key={i} $h={19.550}><span>{i + 1}</span></VMark>)}
        </VRuler>
        <Canvas>
          <HRuler>
            {Array.from({ length: 43 }, (_, i) => <span key={i}>{i + 10}</span>)}
          </HRuler>
          <Page>
            <PageText>分？？</PageText>
            <Corner />
          </Page>
        </Canvas>
        <ScrollTrack>
          <Thumb />
          <ScrollTools>
            <ScrollGlyphs viewBox="0 0 8 42">
              <path d="M2.300 .5h3.400L4 2.500zM2.300 12l1.700-2 1.700 2zM2.300 14.500l1.700-2 1.700 2zM2.300 34h3.400L4 36zM2.300 36.500h3.400L4 38.500z" fill="#777" />
              <circle cx="4" cy="24" r="2" fill="none" stroke="#888" strokeWidth=".8" />
            </ScrollGlyphs>
          </ScrollTools>
        </ScrollTrack>
        <Side>
          {sideIcons.map(n => <SideSlot key={n}><Icon n={n} s={10.500} /></SideSlot>)}
          <SideLine />
          <SideSlot><Icon n="dotsH" s={10} /></SideSlot>
        </Side>
      </Work>

      <StatusBar>
        <StatusItem $w={27}>页码: 1</StatusItem>
        <Divider $h={12} $r={5} />
        <StatusItem $w={34}>页面: 1/1</StatusItem>
        <Divider $h={12} $r={5.500} />
        <StatusItem $w={32.500}>节: 1/1</StatusItem>
        <StatusItem $w={56}>设置值: 1.9厘米</StatusItem>
        <Divider $h={12} $r={5.500} />
        <StatusItem $w={23}>行: 2</StatusItem>
        <StatusItem $w={21.500}>列: 1</StatusItem>
        <Divider $h={12} $r={7} />
        <StatusItem $w={32}>字数: 12</StatusItem>
        <Divider $h={12} $r={4} />
        <StatusItem $w={48}><Icon n="spell" s={10} />拼写检查</StatusItem>
        <Divider $h={12} $r={5} />
        <StatusItem $w={49}><Icon n="spell" s={10} />文档校对</StatusItem>
        <Divider $h={12} $r={7} />
        <StatusItem $w={52}><Icon n="shield" s={10} />文档未保护</StatusItem>
        <StatusRight>
          {views.map(n => <ViewBtn key={n} $on={n === 'doc'}><Icon n={n} s={10} /></ViewBtn>)}
          <Divider $h={13} $l={3} $r={7.500} />
          <Zoom>150%<Caret /></Zoom>
          <Slot $w={15}><Icon n="minus" s={9} /></Slot>
          <Slider><Knob /></Slider>
          <Slot $w={12}><Icon n="plus" s={9} /></Slot>
          <Slot $w={20}><Icon n="fit" s={9} /></Slot>
          <Slot $w={4} />
        </StatusRight>
      </StatusBar>

      <TableMenu />

      <Widget>
        <Svg $s={24} viewBox="0 0 24 24">
          <circle cx="12" cy="12" r="12" fill="#25c76c" stroke="none" />
          <path d="M4.500 10.500c4-4.500 11-4.500 15 0M7 13.500c2.700-3 7.300-3 10 0M9.500 16.300c1.400-1.500 3.600-1.500 5 0" stroke="#fff" strokeWidth="1.600" />
          <circle cx="12" cy="18.300" r="1.200" fill="#fff" stroke="none" />
        </Svg>
        <WidgetRows>
          <WidgetRow>
            <Svg $s={7} viewBox="0 0 6 8"><path d="M2 0v7M2 7L.3 5" stroke="#25b562" strokeWidth="1.500" /><path d="M4.500 8V1M4.500 1l1.300 2" stroke="#f08030" strokeWidth="1.500" /></Svg>0.0
          </WidgetRow>
          <WidgetRow>
            <Svg $s={7} viewBox="0 0 6 8"><path d="M.8 1h4.500v7H.8z" stroke="#25b562" /><path d="M.8 3.500h4.500v4.500H.8z" fill="#25b562" stroke="none" /></Svg>1
          </WidgetRow>
        </WidgetRows>
      </Widget>

      <Overlay viewBox="0 0 1000 538">
        <path d="M808.500 92v-2l2.500-2 2.500 2v2z" fill="#f4f4f4" stroke="#999" strokeWidth=".7" />
        <Watermark />
        <path d="M223 141l11.800 1.200-2.300 3.200L497.200 353.500l-.7.800L229.500 149.500l-2.200 2.500z" fill="#f93f3a" />
      </Overlay>
    </Window>
  );
}
